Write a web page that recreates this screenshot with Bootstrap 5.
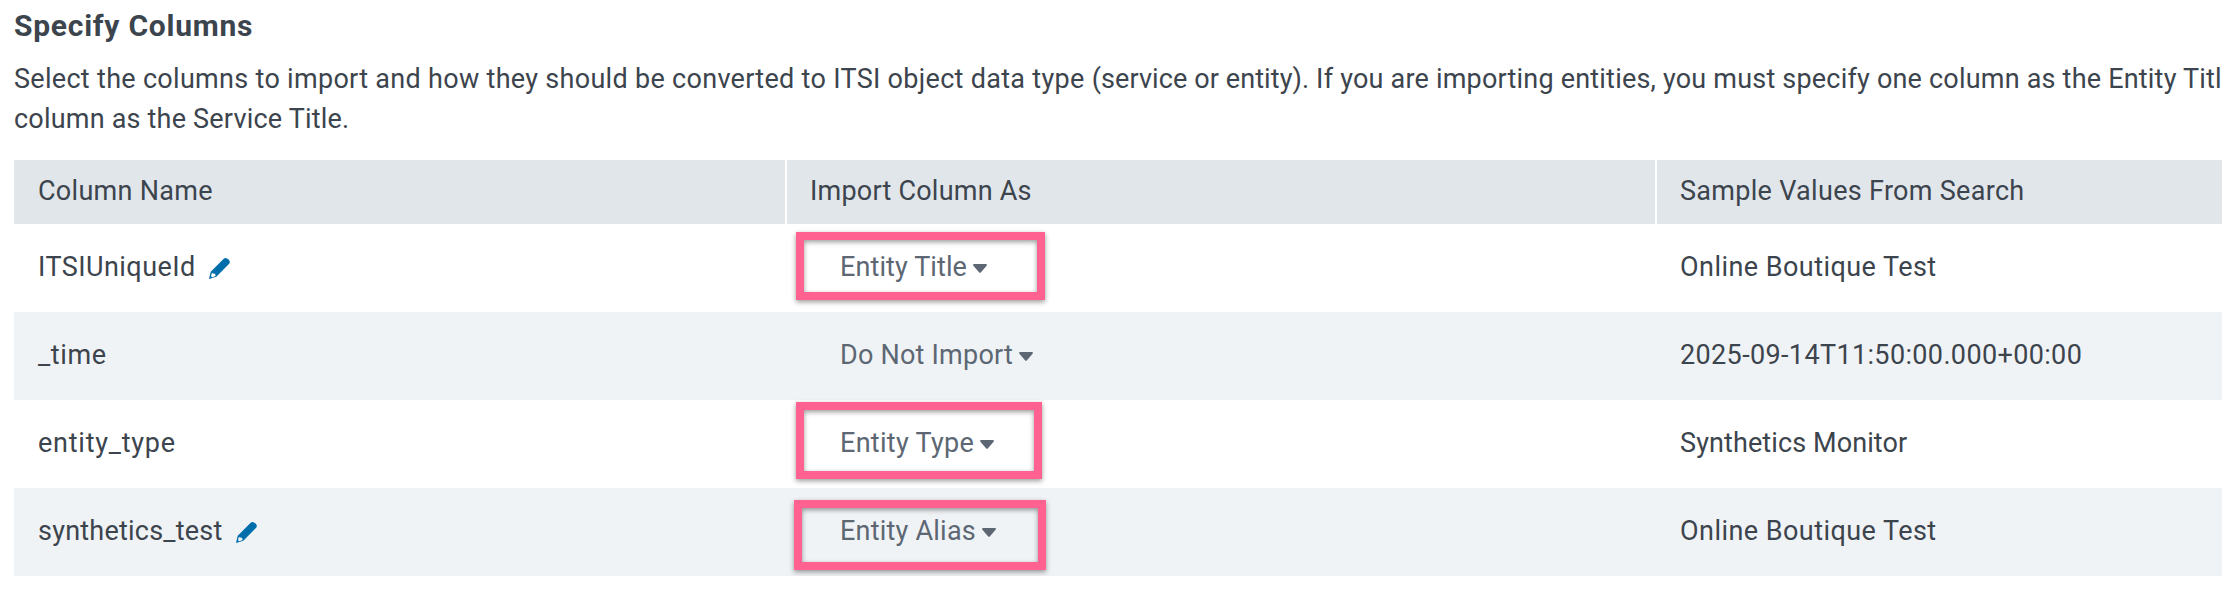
<!DOCTYPE html>
<html lang="en">
<head>
<meta charset="utf-8">
<meta name="viewport" content="width=device-width, initial-scale=1">
<title>Specify Columns</title>
<link href="https://cdn.jsdelivr.net/npm/bootstrap@5.3.0/dist/css/bootstrap.min.css" rel="stylesheet">
<style>
  body { font-family: Roboto, "Liberation Sans", sans-serif; font-size: 27px; line-height: 40px; color: #3c444d; background: #fff; overflow: hidden; letter-spacing: .22px; }
  .page-wrap { padding: 6px 0 0 14px; }
  .section-title { font-size: 30px; line-height: 40px; font-weight: 700; letter-spacing: .75px; }
  .intro { margin: 13px 0 21px; letter-spacing: .2px; }
  .columns-table { width: 2208px; table-layout: fixed; border-collapse: separate; border-spacing: 0; color: inherit; }
  .columns-table .c-name { width: 773px; }
  .columns-table .c-import { width: 870px; }
  .columns-table th, .columns-table td { padding: 0 0 0 24px; border: 0; color: inherit; font-weight: 400; white-space: nowrap; box-shadow: none; }
  .columns-table th { height: 64px; background: #e1e6eb; }
  .columns-table th + th, .columns-table td + td { padding-left: 23px; }
  .columns-table th:not(:last-child) { border-right: 2px solid #fff; }
  .columns-table td { height: 88px; background: transparent; }
  .columns-table tr:nth-child(even) td { background: #f0f3f5; }
  .cell-line { height: 86px; margin-bottom: 2px; }
  th .cell-line { height: 62px; }
  .picker { color: #5c6773; margin-left: 30px; }
  .picker svg { margin: 3px 0 0 6px; }
  .pencil { margin: 3px 0 0 13px; }
  .marker { border: 8px solid #ff6291; box-shadow: 0 2px 5px rgba(0,0,0,.4), inset 0 2px 5px rgba(0,0,0,.4); pointer-events: none; }
  .marker-title { left: 9px; top: 8px; width: 249px; height: 68px; }
  .marker-type { left: 9px; top: 2px; width: 246px; height: 77px; }
  .marker-alias { left: 7px; top: 12px; width: 252px; height: 70px; }
  .ls-1 { letter-spacing: .1px; } .ls-3 { letter-spacing: .3px; }
  .ls-4 { letter-spacing: .36px; } .ls-5 { letter-spacing: .45px; }
  .ls-6 { letter-spacing: .6px; } .ls-8 { letter-spacing: .75px; }
</style>
</head>
<body>
<svg class="d-none" xmlns="http://www.w3.org/2000/svg">
  <symbol id="caret" viewBox="0 0 14 9"><path fill="currentColor" d="M1 0H13Q14.4.4 13.6 1.7L8 8.2Q7 9.2 6 8.2L.4 1.7Q-.4.4 1 0Z"/></symbol>
  <symbol id="pencil" viewBox="0 0 21 21"><path fill="#006eaa" fill-rule="evenodd" d="M14.2 1.3Q16-.7 18 .4Q20.300 1.500 20.800 3.500Q21 5 19.700 6.300L7.300 18.700L0 21L1.700 13.800ZM2.900 14.700L2 18.200L3.300 19.200L6.600 18.100L6.100 15.800L3.900 15.500Z"/></symbol>
</svg>
<main class="page-wrap">
  <h2 class="section-title mb-0">Specify Columns</h2>
  <p class="intro text-nowrap"><span class="ls-3">Select the columns to import and how they should be converted to ITSI object data type </span><span class="ls-1">(service or entity). </span>If you are importing entities, you must specify one column as the Entity Titl<br>column as the Service Title.</p>
  <table class="table columns-table mb-0">
    <colgroup><col class="c-name"><col class="c-import"><col></colgroup>
    <thead>
      <tr>
        <th scope="col"><div class="cell-line d-flex align-items-center ls-3">Column Name</div></th>
        <th scope="col"><div class="cell-line d-flex align-items-center">Import Column As</div></th>
        <th scope="col"><div class="cell-line d-flex align-items-center ls-3">Sample Values From Search</div></th>
      </tr>
    </thead>
    <tbody>
      <tr>
        <td><div class="cell-line d-flex align-items-center ls-5">ITSIUniqueId<svg class="pencil" width="21" height="21"><use href="#pencil"/></svg></div></td>
        <td class="position-relative"><div class="cell-line picker d-flex align-items-center ls-1">Entity Title<svg width="14" height="9"><use href="#caret"/></svg></div><span class="marker marker-title position-absolute"></span></td>
        <td><div class="cell-line d-flex align-items-center ls-5">Online Boutique Test</div></td>
      </tr>
      <tr>
        <td><div class="cell-line d-flex align-items-center ls-6">_time</div></td>
        <td><div class="cell-line picker d-flex align-items-center">Do Not Import<svg width="14" height="9"><use href="#caret"/></svg></div></td>
        <td><div class="cell-line d-flex align-items-center ls-4">2025-09-14T11:50:00.000+00:00</div></td>
      </tr>
      <tr>
        <td><div class="cell-line d-flex align-items-center ls-8">entity_type</div></td>
        <td class="position-relative"><div class="cell-line picker d-flex align-items-center ls-3">Entity Type<svg width="14" height="9"><use href="#caret"/></svg></div><span class="marker marker-type position-absolute"></span></td>
        <td><div class="cell-line d-flex align-items-center ls-1">Synthetics Monitor</div></td>
      </tr>
      <tr>
        <td><div class="cell-line d-flex align-items-center">synthetics_test<svg class="pencil" width="21" height="21"><use href="#pencil"/></svg></div></td>
        <td class="position-relative"><div class="cell-line picker d-flex align-items-center">Entity Alias<svg width="14" height="9"><use href="#caret"/></svg></div><span class="marker marker-alias position-absolute"></span></td>
        <td><div class="cell-line d-flex align-items-center ls-5">Online Boutique Test</div></td>
      </tr>
    </tbody>
  </table>
</main>
<script src="https://cdn.jsdelivr.net/npm/bootstrap@5.3.0/dist/js/bootstrap.bundle.min.js"></script>
</body>
</html>
